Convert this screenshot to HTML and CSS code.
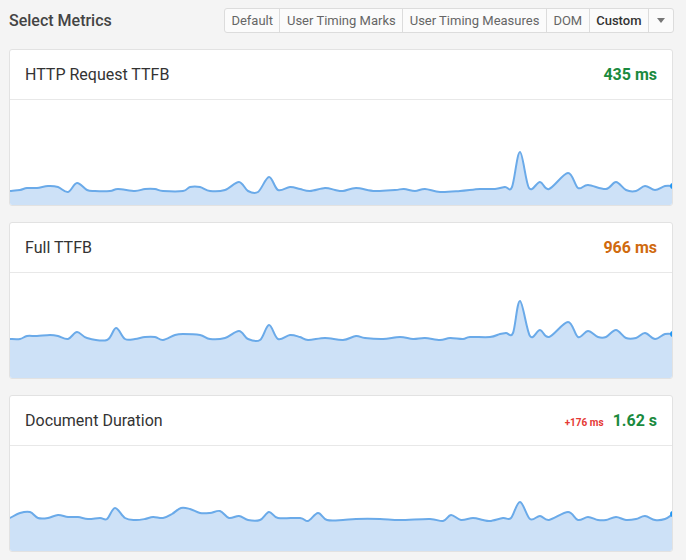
FILE: index.html
```html
<!DOCTYPE html>
<html lang="en">
<head>
<meta charset="UTF-8">
<meta name="viewport" content="width=device-width, initial-scale=1.0">
<title>Select Metrics</title>
<link rel="stylesheet" href="styles.css">
</head>
<body>

<div class="page">
  <div class="toolbar">
    <div class="heading">Select Metrics</div>
    <div class="btn-group">
      <button class="btn">Default</button>
      <button class="btn">User Timing Marks</button>
      <button class="btn">User Timing Measures</button>
      <button class="btn">DOM</button>
      <button class="btn active">Custom</button>
      <button class="btn caret"><span class="tri"></span></button>
    </div>
  </div>

  <div class="card">
    <div class="card-head">
      <div class="title">HTTP Request TTFB</div>
      <div class="value good">435 ms</div>
    </div>
    <svg class="chart" id="chart1" viewBox="0 0 662 105"></svg>
  </div>

  <div class="card">
    <div class="card-head">
      <div class="title">Full TTFB</div>
      <div class="value warn">966 ms</div>
    </div>
    <svg class="chart" id="chart2" viewBox="0 0 662 105"></svg>
  </div>

  <div class="card">
    <div class="card-head">
      <div class="title">Document Duration</div>
      <div class="values">
        <span class="delta">+176 ms</span>
        <span class="value good">1.62 s</span>
      </div>
    </div>
    <svg class="chart" id="chart3" viewBox="0 0 662 105"></svg>
  </div>
</div>

<script>
  // points in page coords, [x, y]; top is the y of the chart's first row
  const charts = [
    { id: 'chart1', top: 100, points: [
      [10,191],[20,190],[27,188],[37,188],[48,186],[58,187],[68,192],[77,183],[87,190],[95,191],
      [110,191],[118,189],[135,191],[145,189],[155,189],[163,191],[183,191],[190,187],[200,187],[210,191],
      [225,190],[239,182],[248,191],[258,192],[269,177],[278,190],[290,187],[300,189],[310,191],[325,188],
      [335,190],[343,191],[356,188],[375,191],[395,190],[404,189],[415,191],[425,189],[440,192],[460,191],
      [480,189],[495,189],[505,187],[512,187],[520,152],[529,188],[540,182],[549,189],[568,173],[578,188],
      [588,185],[606,189],[616,182],[626,190],[636,191],[645,186],[655,190],[665,186],[673,186]
    ]},
    { id: 'chart2', top: 273, points: [
      [10,339],[20,339],[27,336],[37,336],[50,335],[58,336],[68,339],[77,332],[87,338],[107,340],
      [116,328],[125,339],[135,339],[145,337],[155,337],[163,340],[175,335],[183,334],[200,335],[210,339],
      [225,338],[239,331],[248,339],[260,340],[269,325],[278,339],[290,335],[300,337],[308,340],[325,338],
      [343,340],[356,336],[365,338],[383,339],[400,337],[413,339],[425,338],[440,340],[450,338],[463,339],
      [470,337],[490,337],[500,334],[506,333],[513,333],[520,301],[530,336],[540,330],[549,337],[568,322],
      [578,337],[588,331],[598,337],[606,337],[616,330],[626,338],[636,338],[645,333],[655,339],[665,334],[673,334]
    ]},
    { id: 'chart3', top: 446, points: [
      [10,518],[20,513],[30,512],[38,518],[48,518],[58,515],[68,517],[78,517],[88,519],[100,518],
      [107,519],[115,508],[125,518],[135,520],[145,519],[153,517],[163,518],[172,514],[181,508],[190,509],
      [200,513],[210,513],[220,511],[229,518],[239,516],[248,520],[260,520],[269,512],[278,518],[300,518],
      [308,521],[318,513],[327,520],[343,520],[356,519],[380,519],[400,520],[430,519],[443,521],[451,515],
      [461,520],[473,518],[483,520],[490,521],[503,518],[511,518],[520,502],[530,519],[540,516],[549,520],
      [568,512],[578,520],[588,517],[598,520],[606,520],[616,517],[626,520],[636,519],[645,516],[655,520],
      [665,519],[673,514]
    ]}
  ];

  const ns = 'http://www.w3.org/2000/svg';

  function smoothPath(pts) {
    let d = 'M' + pts[0][0] + ',' + pts[0][1];
    for (let i = 0; i < pts.length - 1; i++) {
      const p0 = pts[i - 1] || pts[i];
      const p1 = pts[i];
      const p2 = pts[i + 1];
      const p3 = pts[i + 2] || p2;
      const c1x = p1[0] + (p2[0] - p0[0]) / 6;
      const c1y = p1[1] + (p2[1] - p0[1]) / 6;
      const c2x = p2[0] - (p3[0] - p1[0]) / 6;
      const c2y = p2[1] - (p3[1] - p1[1]) / 6;
      d += ' C' + c1x.toFixed(1) + ',' + c1y.toFixed(1) + ' ' + c2x.toFixed(1) + ',' + c2y.toFixed(1) + ' ' + p2[0] + ',' + p2[1];
    }
    return d;
  }

  charts.forEach(chart => {
    const svg = document.getElementById(chart.id);
    const pts = chart.points.map(p => [p[0] - 10, p[1] - chart.top]);
    const line = smoothPath(pts);
    const last = pts[pts.length - 1];

    const area = document.createElementNS(ns, 'path');
    area.setAttribute('d', line + ' L' + last[0] + ',105 L' + pts[0][0] + ',105 Z');
    area.setAttribute('class', 'area');
    svg.appendChild(area);

    const stroke = document.createElementNS(ns, 'path');
    stroke.setAttribute('d', line);
    stroke.setAttribute('class', 'line');
    svg.appendChild(stroke);

    const dot = document.createElementNS(ns, 'circle');
    dot.setAttribute('cx', last[0]);
    dot.setAttribute('cy', last[1]);
    dot.setAttribute('r', 3);
    dot.setAttribute('class', 'dot');
    svg.appendChild(dot);
  });
</script>

</body>
</html>
```

FILE: styles.css
```css
body {
  margin: 0;
  background-color: #f4f4f4;
  font-family: Roboto, "Liberation Sans", Arial, sans-serif;
  color: #333;
}
.page {
  padding: 8px 13px 0 9px;
}
.toolbar {
  display: flex;
  justify-content: space-between;
  align-items: center;
  height: 25px;
  margin-bottom: 16px;
}
.heading {
  font-size: 16px;
  font-weight: 500;
  color: #444;
}
.btn-group {
  display: flex;
  height: 25px;
  border: 1px solid #dcdcdc;
  border-radius: 3px;
  background-color: #fbfbfb;
  box-sizing: border-box;
  margin-right: -1px;
}
.btn {
  font-family: inherit;
  font-size: 13px;
  color: #666;
  background: none;
  border: none;
  border-left: 1px solid #dcdcdc;
  padding: 0 6.5px;
  height: 23px;
  cursor: pointer;
}
.btn:first-child {
  border-left: none;
}
.btn.active {
  color: #333;
  font-weight: 500;
}
.btn.caret {
  width: 25px;
  padding: 0;
  display: flex;
  align-items: center;
  justify-content: center;
}
.tri {
  width: 0;
  height: 0;
  border-left: 4px solid transparent;
  border-right: 4px solid transparent;
  border-top: 5px solid #777;
}
.card {
  background-color: #fff;
  border: 1px solid #e2e2e2;
  border-radius: 3px;
  margin-bottom: 16px;
  overflow: hidden;
}
.card-head {
  display: flex;
  justify-content: space-between;
  align-items: center;
  height: 49px;
  padding: 0 15px;
  border-bottom: 1px solid #e8e8e8;
}
.title {
  font-size: 16px;
  color: #333;
}
.values {
  display: flex;
  align-items: baseline;
  gap: 9px;
}
.value {
  font-size: 16px;
  font-weight: bold;
}
.good {
  color: #1a8a3e;
}
.warn {
  color: #d06a0e;
}
.delta {
  font-size: 10px;
  font-weight: bold;
  color: #e53935;
}
.chart {
  display: block;
  width: 662px;
  height: 105px;
}
.area {
  fill: #cde1f7;
}
.line {
  fill: none;
  stroke: #6aaae9;
  stroke-width: 2;
  stroke-linejoin: round;
}
.dot {
  fill: #2196f3;
}
```
